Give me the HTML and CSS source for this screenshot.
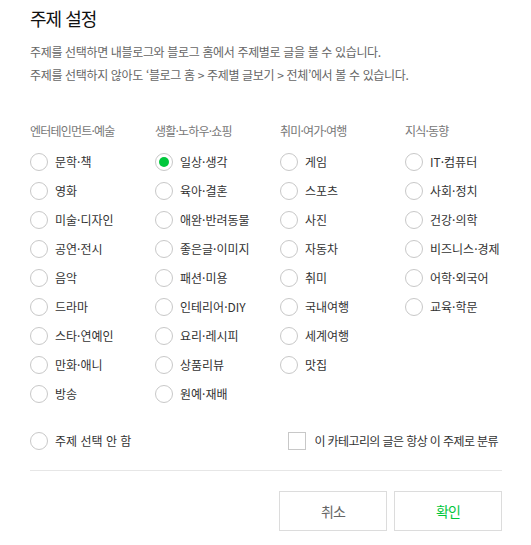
FILE: index.html
```html
<!DOCTYPE html>
<html lang="ko">
<head>
<meta charset="utf-8">
<title>주제 설정</title>
<link rel="stylesheet" href="styles.css">
</head>
<body>
<div class="dialog">
  <h1 class="title">주제 설정</h1>
  <div class="desc">
    <p>주제를 선택하면 내블로그와 블로그 홈에서 주제별로 글을 볼 수 있습니다.</p>
    <p>주제를 선택하지 않아도 ‘블로그 홈 &gt; 주제별 글보기 &gt; 전체’에서 볼 수 있습니다.</p>
  </div>

  <div class="grid">
    <div class="col">
      <div class="head">엔터테인먼트·예술</div>
      <label class="opt"><input type="radio" name="t"><span>문학·책</span></label>
      <label class="opt"><input type="radio" name="t"><span>영화</span></label>
      <label class="opt"><input type="radio" name="t"><span>미술·디자인</span></label>
      <label class="opt"><input type="radio" name="t"><span>공연·전시</span></label>
      <label class="opt"><input type="radio" name="t"><span>음악</span></label>
      <label class="opt"><input type="radio" name="t"><span>드라마</span></label>
      <label class="opt"><input type="radio" name="t"><span>스타·연예인</span></label>
      <label class="opt"><input type="radio" name="t"><span>만화·애니</span></label>
      <label class="opt"><input type="radio" name="t"><span>방송</span></label>
    </div>
    <div class="col">
      <div class="head">생활·노하우·쇼핑</div>
      <label class="opt"><input type="radio" name="t" checked><span>일상·생각</span></label>
      <label class="opt"><input type="radio" name="t"><span>육아·결혼</span></label>
      <label class="opt"><input type="radio" name="t"><span>애완·반려동물</span></label>
      <label class="opt"><input type="radio" name="t"><span>좋은글·이미지</span></label>
      <label class="opt"><input type="radio" name="t"><span>패션·미용</span></label>
      <label class="opt"><input type="radio" name="t"><span>인테리어·DIY</span></label>
      <label class="opt"><input type="radio" name="t"><span>요리·레시피</span></label>
      <label class="opt"><input type="radio" name="t"><span>상품리뷰</span></label>
      <label class="opt"><input type="radio" name="t"><span>원예·재배</span></label>
    </div>
    <div class="col">
      <div class="head">취미·여가·여행</div>
      <label class="opt"><input type="radio" name="t"><span>게임</span></label>
      <label class="opt"><input type="radio" name="t"><span>스포츠</span></label>
      <label class="opt"><input type="radio" name="t"><span>사진</span></label>
      <label class="opt"><input type="radio" name="t"><span>자동차</span></label>
      <label class="opt"><input type="radio" name="t"><span>취미</span></label>
      <label class="opt"><input type="radio" name="t"><span>국내여행</span></label>
      <label class="opt"><input type="radio" name="t"><span>세계여행</span></label>
      <label class="opt"><input type="radio" name="t"><span>맛집</span></label>
    </div>
    <div class="col">
      <div class="head">지식·동향</div>
      <label class="opt"><input type="radio" name="t"><span>IT·컴퓨터</span></label>
      <label class="opt"><input type="radio" name="t"><span>사회·정치</span></label>
      <label class="opt"><input type="radio" name="t"><span>건강·의학</span></label>
      <label class="opt"><input type="radio" name="t"><span>비즈니스·경제</span></label>
      <label class="opt"><input type="radio" name="t"><span>어학·외국어</span></label>
      <label class="opt"><input type="radio" name="t"><span>교육·학문</span></label>
    </div>
  </div>

  <div class="extra">
    <label class="opt"><input type="radio" name="t"><span>주제 선택 안 함</span></label>
    <label class="check"><input type="checkbox"><span>이 카테고리의 글은 항상 이 주제로 분류</span></label>
  </div>

  <div class="divider"></div>

  <div class="buttons">
    <button class="btn cancel" type="button">취소</button>
    <button class="btn ok" type="button">확인</button>
  </div>
</div>
</body>
</html>
```

FILE: styles.css
```css
* { box-sizing: border-box; }
html, body { margin: 0; padding: 0; background: #fff; }
body {
  font-family: "Noto Sans CJK KR", "Noto Sans", "Liberation Sans", sans-serif;
  color: #333;
}
.dialog {
  width: 531px;
  padding: 6px 29px 0 30px;
}
.title {
  margin: 0;
  font-size: 18px;
  line-height: 24px;
  font-weight: 400;
  color: #111;
  letter-spacing: -1px;
}
.desc {
  margin-top: 10px;
  font-size: 12px;
  line-height: 23px;
  color: #666;
  letter-spacing: -0.35px;
}
.desc p { margin: 0; }
.grid {
  margin-top: 37px;
  display: grid;
  grid-template-columns: repeat(4, 125px);
}
.col { display: flex; flex-direction: column; }
.head {
  font-size: 12px;
  line-height: 16px;
  color: #777;
  letter-spacing: -0.8px;
  margin-bottom: 8px;
}
.opt {
  display: flex;
  align-items: center;
  height: 29px;
  font-size: 12px;
  letter-spacing: 0;
  color: #333;
  cursor: pointer;
}
.opt input {
  appearance: none;
  -webkit-appearance: none;
  margin: 0 7px 0 0;
  width: 18px;
  height: 18px;
  border: 1px solid #c8c8c8;
  border-radius: 50%;
  background: #fff;
  flex: none;
  position: relative;
}
.opt input:checked::after {
  content: "";
  position: absolute;
  left: 3px;
  top: 3px;
  width: 10px;
  height: 10px;
  border-radius: 50%;
  background: #00c73c;
}
.extra {
  margin-top: 18px;
  display: flex;
  justify-content: space-between;
  align-items: center;
}
.check {
  display: flex;
  align-items: center;
  font-size: 12px;
  letter-spacing: -0.6px;
  color: #333;
  margin-right: 4px;
}
.check input {
  appearance: none;
  -webkit-appearance: none;
  margin: 0 8px 0 0;
  width: 18px;
  height: 18px;
  border: 1px solid #c8c8c8;
  background: #fff;
}
.divider {
  margin-top: 15px;
  height: 1px;
  background: #e6e6e6;
}
.buttons {
  margin-top: 20px;
  display: flex;
  justify-content: flex-end;
  gap: 7px;
}
.btn {
  width: 108px;
  height: 40px;
  border: 1px solid #dcdcdc;
  background: #fff;
  font-family: inherit;
  font-size: 14px;
  letter-spacing: -1px;
  padding: 0;
  cursor: pointer;
}
.cancel { color: #666; }
.ok { color: #00c73c; }
```
